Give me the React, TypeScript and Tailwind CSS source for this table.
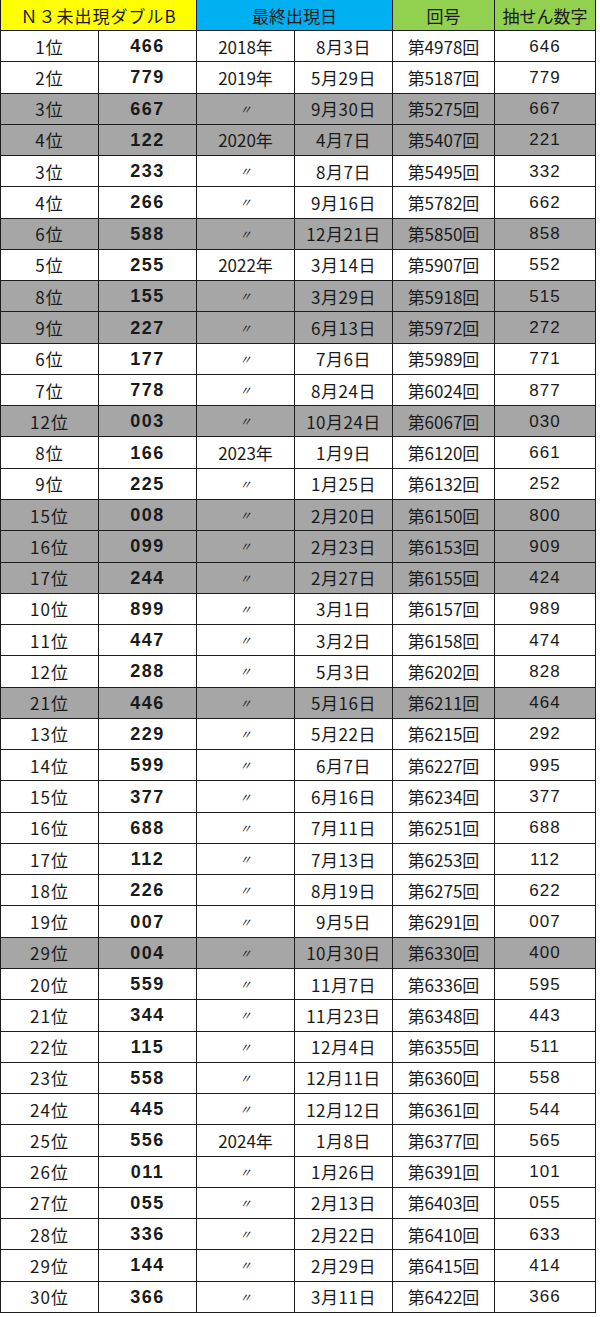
import React from "react";

type Row = {
  rank: string;
  num: string;
  year: string;
  date: string;
  round: string;
  draw: string;
  gray?: boolean;
};

const D = "〃";

const rows: Row[] = [
  { rank: "1位", num: "466", year: "2018年", date: "8月3日", round: "第4978回", draw: "646" },
  { rank: "2位", num: "779", year: "2019年", date: "5月29日", round: "第5187回", draw: "779" },
  { rank: "3位", num: "667", year: D, date: "9月30日", round: "第5275回", draw: "667", gray: true },
  { rank: "4位", num: "122", year: "2020年", date: "4月7日", round: "第5407回", draw: "221", gray: true },
  { rank: "3位", num: "233", year: D, date: "8月7日", round: "第5495回", draw: "332" },
  { rank: "4位", num: "266", year: D, date: "9月16日", round: "第5782回", draw: "662" },
  { rank: "6位", num: "588", year: D, date: "12月21日", round: "第5850回", draw: "858", gray: true },
  { rank: "5位", num: "255", year: "2022年", date: "3月14日", round: "第5907回", draw: "552" },
  { rank: "8位", num: "155", year: D, date: "3月29日", round: "第5918回", draw: "515", gray: true },
  { rank: "9位", num: "227", year: D, date: "6月13日", round: "第5972回", draw: "272", gray: true },
  { rank: "6位", num: "177", year: D, date: "7月6日", round: "第5989回", draw: "771" },
  { rank: "7位", num: "778", year: D, date: "8月24日", round: "第6024回", draw: "877" },
  { rank: "12位", num: "003", year: D, date: "10月24日", round: "第6067回", draw: "030", gray: true },
  { rank: "8位", num: "166", year: "2023年", date: "1月9日", round: "第6120回", draw: "661" },
  { rank: "9位", num: "225", year: D, date: "1月25日", round: "第6132回", draw: "252" },
  { rank: "15位", num: "008", year: D, date: "2月20日", round: "第6150回", draw: "800", gray: true },
  { rank: "16位", num: "099", year: D, date: "2月23日", round: "第6153回", draw: "909", gray: true },
  { rank: "17位", num: "244", year: D, date: "2月27日", round: "第6155回", draw: "424", gray: true },
  { rank: "10位", num: "899", year: D, date: "3月1日", round: "第6157回", draw: "989" },
  { rank: "11位", num: "447", year: D, date: "3月2日", round: "第6158回", draw: "474" },
  { rank: "12位", num: "288", year: D, date: "5月3日", round: "第6202回", draw: "828" },
  { rank: "21位", num: "446", year: D, date: "5月16日", round: "第6211回", draw: "464", gray: true },
  { rank: "13位", num: "229", year: D, date: "5月22日", round: "第6215回", draw: "292" },
  { rank: "14位", num: "599", year: D, date: "6月7日", round: "第6227回", draw: "995" },
  { rank: "15位", num: "377", year: D, date: "6月16日", round: "第6234回", draw: "377" },
  { rank: "16位", num: "688", year: D, date: "7月11日", round: "第6251回", draw: "688" },
  { rank: "17位", num: "112", year: D, date: "7月13日", round: "第6253回", draw: "112" },
  { rank: "18位", num: "226", year: D, date: "8月19日", round: "第6275回", draw: "622" },
  { rank: "19位", num: "007", year: D, date: "9月5日", round: "第6291回", draw: "007" },
  { rank: "29位", num: "004", year: D, date: "10月30日", round: "第6330回", draw: "400", gray: true },
  { rank: "20位", num: "559", year: D, date: "11月7日", round: "第6336回", draw: "595" },
  { rank: "21位", num: "344", year: D, date: "11月23日", round: "第6348回", draw: "443" },
  { rank: "22位", num: "115", year: D, date: "12月4日", round: "第6355回", draw: "511" },
  { rank: "23位", num: "558", year: D, date: "12月11日", round: "第6360回", draw: "558" },
  { rank: "24位", num: "445", year: D, date: "12月12日", round: "第6361回", draw: "544" },
  { rank: "25位", num: "556", year: "2024年", date: "1月8日", round: "第6377回", draw: "565" },
  { rank: "26位", num: "011", year: D, date: "1月26日", round: "第6391回", draw: "101" },
  { rank: "27位", num: "055", year: D, date: "2月13日", round: "第6403回", draw: "055" },
  { rank: "28位", num: "336", year: D, date: "2月22日", round: "第6410回", draw: "633" },
  { rank: "29位", num: "144", year: D, date: "2月29日", round: "第6415回", draw: "414" },
  { rank: "30位", num: "366", year: D, date: "3月11日", round: "第6422回", draw: "366" },
];

const cell = "flex items-center justify-center border-r border-b border-[#1c1c1c] whitespace-nowrap";

export default function App() {
  return (
    <div className="w-[600px] h-[1317px] bg-white font-['Noto_Sans_CJK_JP',sans-serif] text-[17px] leading-none text-[#1a1a1a]">
      <div className="grid w-[595px] grid-cols-[98px_98px_98px_98px_102px_101px] grid-rows-[31px] auto-rows-[31.27px] border-l border-[#1c1c1c]">
        <div className={`${cell} col-span-2 bg-[#ffff00] tracking-[1px]`}>Ｎ３未出現ダブルB</div>
        <div className={`${cell} col-span-2 bg-[#00b0f0]`}>最終出現日</div>
        <div className={`${cell} bg-[#92d050]`}>回号</div>
        <div className={`${cell} bg-[#92d050]`}>抽せん数字</div>
        {rows.map((r, i) => {
          const bg = r.gray ? "bg-[#a6a6a6]" : "bg-white";
          return (
            <React.Fragment key={i}>
              <div className={`${cell} ${bg} tracking-[1px]`}>{r.rank}</div>
              <div className={`${cell} ${bg} font-['Liberation_Sans',sans-serif] font-bold text-[18px] tracking-[1.5px]`}>
                {r.num}
              </div>
              <div className={`${cell} ${bg} ${r.year === D ? "text-[12px] italic" : ""}`}>{r.year}</div>
              <div className={`${cell} ${bg} tracking-[0.5px]`}>{r.date}</div>
              <div className={`${cell} ${bg}`}>{r.round}</div>
              <div className={`${cell} ${bg} font-['Liberation_Sans',sans-serif] tracking-[1px]`}>{r.draw}</div>
            </React.Fragment>
          );
        })}
      </div>
    </div>
  );
}
